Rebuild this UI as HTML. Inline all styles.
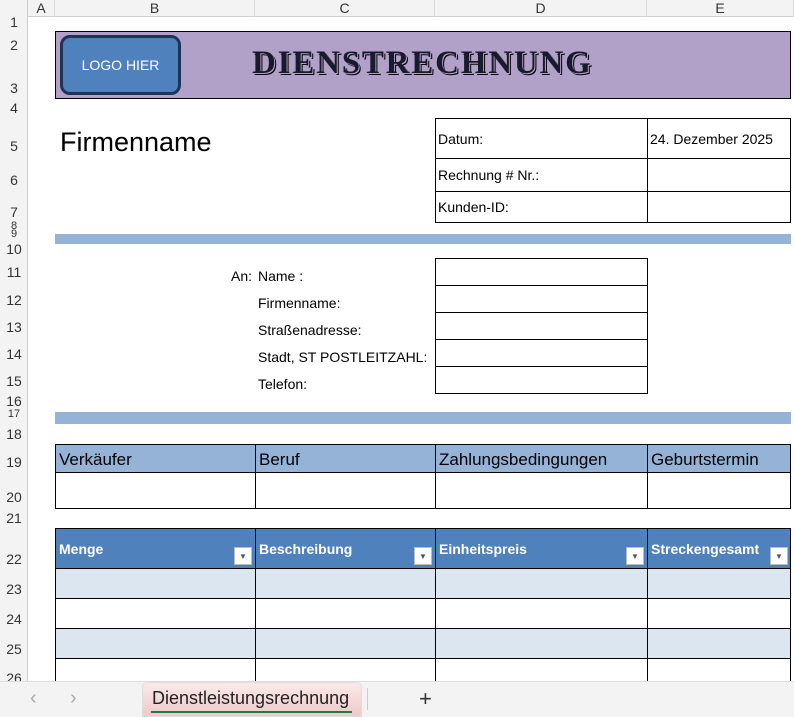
<!DOCTYPE html><html><head><style>
body{margin:0;width:794px;height:717px;overflow:hidden;background:#fff;font-family:"Liberation Sans",Arial,sans-serif;position:relative}
div{position:absolute;box-sizing:border-box}
.rh{left:0;width:28px;text-align:center;font-size:14px;color:#333}
.ch{top:0;height:17px;text-align:center;font-size:14px;color:#333;line-height:17px;border-right:1px solid #dadada}
.t{font-size:14px;color:#000}
.b{border:1px solid #000}
.dd{width:18px;height:18px;background:#fff;border:1px solid #bbb;font-size:8px;color:#555;text-align:center;line-height:18px}
</style></head><body>
<div style="left:0;top:0;width:794px;height:17px;background:#f3f3f3;border-bottom:1px solid #cfcfcf"></div>
<div style="left:0;top:0;width:28px;height:717px;background:#f3f3f3;border-right:1px solid #cfcfcf"></div>
<div class="ch" style="left:28px;width:27px">A</div>
<div class="ch" style="left:55px;width:200px">B</div>
<div class="ch" style="left:255px;width:180px">C</div>
<div class="ch" style="left:435px;width:212px">D</div>
<div class="ch" style="left:647px;width:147px">E</div>
<div class="rh" style="top:14px">1</div><div class="rh" style="top:37px">2</div><div class="rh" style="top:80px">3</div><div class="rh" style="top:100px">4</div><div class="rh" style="top:138px">5</div><div class="rh" style="top:172px">6</div><div class="rh" style="top:204px">7</div><div class="rh" style="top:220px;font-size:11px">8</div><div class="rh" style="top:228px;font-size:11px">9</div><div class="rh" style="top:241px">10</div><div class="rh" style="top:264px">11</div><div class="rh" style="top:292px">12</div><div class="rh" style="top:319px">13</div><div class="rh" style="top:346px">14</div><div class="rh" style="top:373px">15</div><div class="rh" style="top:393px">16</div><div class="rh" style="top:408px;font-size:11px">17</div><div class="rh" style="top:426px">18</div><div class="rh" style="top:454px">19</div><div class="rh" style="top:489px">20</div><div class="rh" style="top:510px">21</div><div class="rh" style="top:551px">22</div><div class="rh" style="top:581px">23</div><div class="rh" style="top:611px">24</div><div class="rh" style="top:641px">25</div><div class="rh" style="top:670px">26</div>

<div style="left:55px;top:31px;width:736px;height:68px;background:#b1a0c7;border:1px solid #000"></div>
<div style="left:60px;top:35px;width:121px;height:60px;background:#4f81bd;border:3px solid #1f3355;border-radius:10px;color:#fff;font-size:14px;text-align:center;line-height:54px">LOGO HIER</div>
<div style="left:252px;top:45px;font-family:'Liberation Serif',serif;font-weight:bold;font-size:33px;letter-spacing:1.8px;color:#1a1a2e;text-shadow:1px 1px 0 #b1a0c7,2px 2px 0 #000">DIENSTRECHNUNG</div>

<div style="left:60px;top:127px;font-size:27px">Firmenname</div>
<div class="b" style="left:435px;top:118px;width:356px;height:105px"></div>
<div style="left:435px;top:158px;width:356px;border-top:1px solid #000"></div>
<div style="left:435px;top:191px;width:356px;border-top:1px solid #000"></div>
<div style="left:647px;top:118px;height:105px;border-left:1px solid #000"></div>
<div class="t" style="left:438px;top:131px">Datum:</div>
<div class="t" style="left:650px;top:131px">24. Dezember 2025</div>
<div class="t" style="left:438px;top:167px">Rechnung # Nr.:</div>
<div class="t" style="left:438px;top:199px">Kunden-ID:</div>

<div style="left:55px;top:234px;width:736px;height:10px;background:#95b3d7"></div>
<div class="t" style="left:231px;top:268px">An:</div>
<div class="t" style="left:258px;top:268px">Name :</div>
<div class="t" style="left:258px;top:295px">Firmenname:</div>
<div class="t" style="left:258px;top:322px">Straßenadresse:</div>
<div class="t" style="left:258px;top:349px">Stadt, ST POSTLEITZAHL:</div>
<div class="t" style="left:258px;top:376px">Telefon:</div>
<div class="b" style="left:435px;top:258px;width:213px;height:136px"></div>
<div style="left:435px;top:285px;width:213px;border-top:1px solid #000"></div>
<div style="left:435px;top:312px;width:213px;border-top:1px solid #000"></div>
<div style="left:435px;top:339px;width:213px;border-top:1px solid #000"></div>
<div style="left:435px;top:366px;width:213px;border-top:1px solid #000"></div>

<div style="left:55px;top:412px;width:736px;height:12px;background:#95b3d7"></div>

<div style="left:55px;top:444px;width:736px;height:28px;background:#95b3d7"></div>
<div class="b" style="left:55px;top:444px;width:736px;height:65px"></div>
<div style="left:55px;top:472px;width:736px;border-top:1px solid #000"></div>
<div style="left:255px;top:444px;height:65px;border-left:1px solid #000"></div>
<div style="left:435px;top:444px;height:65px;border-left:1px solid #000"></div>
<div style="left:647px;top:444px;height:65px;border-left:1px solid #000"></div>
<div style="left:59px;top:450px;font-size:17px">Verkäufer</div>
<div style="left:259px;top:450px;font-size:17px">Beruf</div>
<div style="left:439px;top:450px;font-size:17px">Zahlungsbedingungen</div>
<div style="left:651px;top:450px;font-size:17px">Geburtstermin</div>

<div style="left:55px;top:528px;width:736px;height:40px;background:#4f81bd"></div>
<div style="left:55px;top:568px;width:736px;height:30px;background:#dce6f1"></div>
<div style="left:55px;top:628px;width:736px;height:30px;background:#dce6f1"></div>
<div class="b" style="left:55px;top:528px;width:736px;height:170px"></div>
<div style="left:55px;top:568px;width:736px;border-top:1px solid #000"></div>
<div style="left:55px;top:598px;width:736px;border-top:1px solid #000"></div>
<div style="left:55px;top:628px;width:736px;border-top:1px solid #000"></div>
<div style="left:55px;top:658px;width:736px;border-top:1px solid #000"></div>
<div style="left:255px;top:528px;height:170px;border-left:1px solid #000"></div>
<div style="left:435px;top:528px;height:170px;border-left:1px solid #000"></div>
<div style="left:647px;top:528px;height:170px;border-left:1px solid #000"></div>
<div style="left:59px;top:541px;font-size:14px;font-weight:bold;color:#fff">Menge</div>
<div style="left:259px;top:541px;font-size:14px;font-weight:bold;color:#fff">Beschreibung</div>
<div style="left:439px;top:541px;font-size:14px;font-weight:bold;color:#fff">Einheitspreis</div>
<div style="left:651px;top:541px;font-size:14px;font-weight:bold;color:#fff">Streckengesamt</div>
<div class="dd" style="left:234px;top:547px">▼</div>
<div class="dd" style="left:414px;top:547px">▼</div>
<div class="dd" style="left:626px;top:547px">▼</div>
<div class="dd" style="left:770px;top:547px">▼</div>

<div style="left:0;top:681px;width:794px;height:36px;background:#f3f3f3;border-top:1px solid #ddd"></div>
<div style="left:30px;top:687px;font-size:20px;color:#aaa">‹</div>
<div style="left:70px;top:687px;font-size:20px;color:#aaa">›</div>
<div style="left:142px;top:682px;width:220px;height:35px;background:linear-gradient(#fbeaea,#f0c8c8);border:1px solid #ddd;border-radius:5px 5px 0 0"></div>
<div style="left:152px;top:688px;font-size:18px;color:#222">Dienstleistungsrechnung</div>
<div style="left:151px;top:711px;width:201px;height:2px;background:#1e7a45"></div>
<div style="left:367px;top:688px;height:22px;border-left:1px solid #ccc"></div>
<div style="left:419px;top:686px;font-size:22px;color:#333">+</div>
</body></html>
